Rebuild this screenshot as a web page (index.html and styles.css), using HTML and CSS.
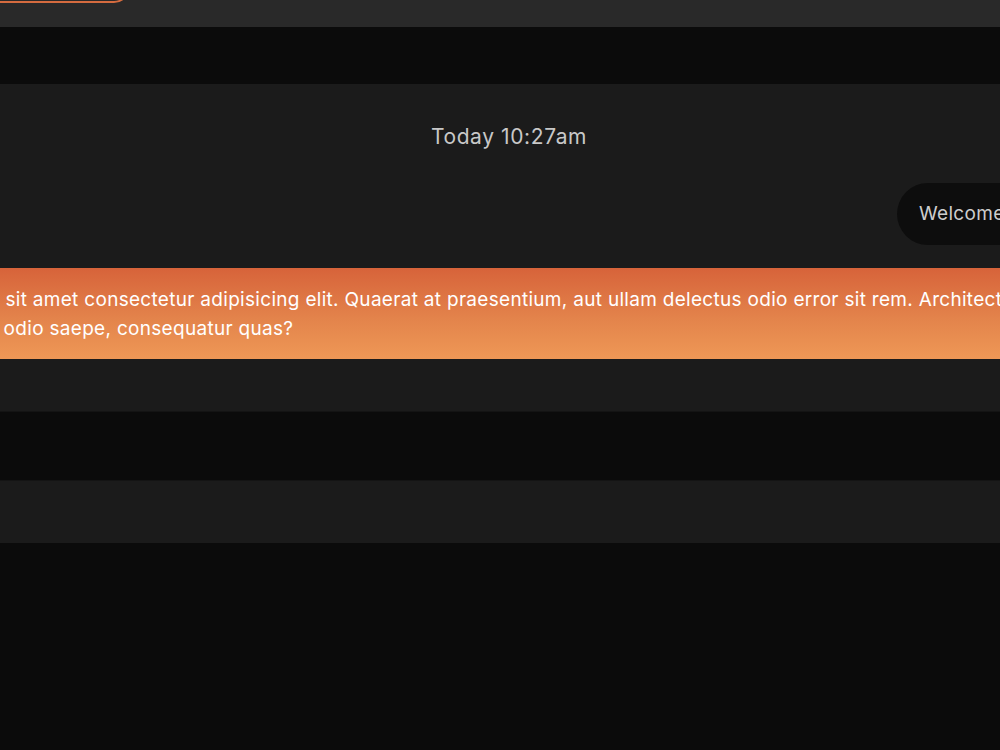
FILE: index.html
```html
<!DOCTYPE html>
<html lang="en">
<head>
<meta charset="UTF-8" />
<meta name="viewport" content="width=device-width, initial-scale=1" />
<title>Chat</title>
<link rel="stylesheet" href="styles.css">
</head>
<body>

<header class="topbar">
  <button class="new-chat">New chat</button>
</header>

<div class="band"></div>

<section class="chat">
  <p class="stamp">Today 10:27am</p>

  <div class="row row-user">
    <div class="bubble">Welcome to the chat, how can we help?</div>
  </div>

  <div class="reply">
    Lorem ipsum dolor sit amet consectetur adipisicing elit. Quaerat at praesentium, aut ullam delectus odio error sit rem. Architecto nesciunt quidem, sed dolore eveniet odio saepe, consequatur quas?
  </div>
</section>

<div class="band band-tall"></div>

<div class="composer"></div>

</body>
</html>
```

FILE: styles.css
```css
html, body {
  margin: 0;
  padding: 0;
  background: #0b0b0b;
  font-family: Inter, "Noto Sans", sans-serif;
  overflow: hidden;
}
.topbar {
  height: 27px;
  background: #292929;
  overflow: hidden;
}
.new-chat {
  display: block;
  width: 150px;
  height: 40px;
  margin: -37px 0 0 -20px;
  border: 2px solid #d56b3f;
  border-radius: 16px;
  background: transparent;
  color: #fff;
}
.band {
  height: 57px;
  background: #0b0b0b;
}
.band-tall {
  height: 68px;
  border-top: 1px solid #141414;
}
.chat {
  background: #1b1b1b;
  padding: 41px 0 52px;
  overflow: hidden;
}
.stamp {
  margin: 0;
  padding-left: 18px;
  text-align: center;
  font-size: 21px;
  line-height: 24px;
  letter-spacing: 0.6px;
  color: #c8c8c8;
}
.row {
  display: flex;
  margin-top: 34px;
}
.row-user {
  justify-content: flex-start;
}
.bubble {
  flex: none;
  margin-left: 897px;
  padding: 20px 22px;
  font-size: 19px;
  line-height: 22px;
  letter-spacing: 0.3px;
  color: #cdcdcd;
  background: #0d0d0d;
  border-radius: 31px;
  white-space: nowrap;
}
.reply {
  margin: 23px 0 0 -173px;
  width: 1370px;
  padding: 17px 0 16px;
  font-size: 19px;
  line-height: 29px;
  letter-spacing: 0.3px;
  color: #fff;
  background: linear-gradient(180deg, #d7633a 0%, #e3834b 55%, #ee9856 100%);
}
.composer {
  height: 62px;
  background: #1b1b1b;
  border-top: 1px solid #141414;
}
```
